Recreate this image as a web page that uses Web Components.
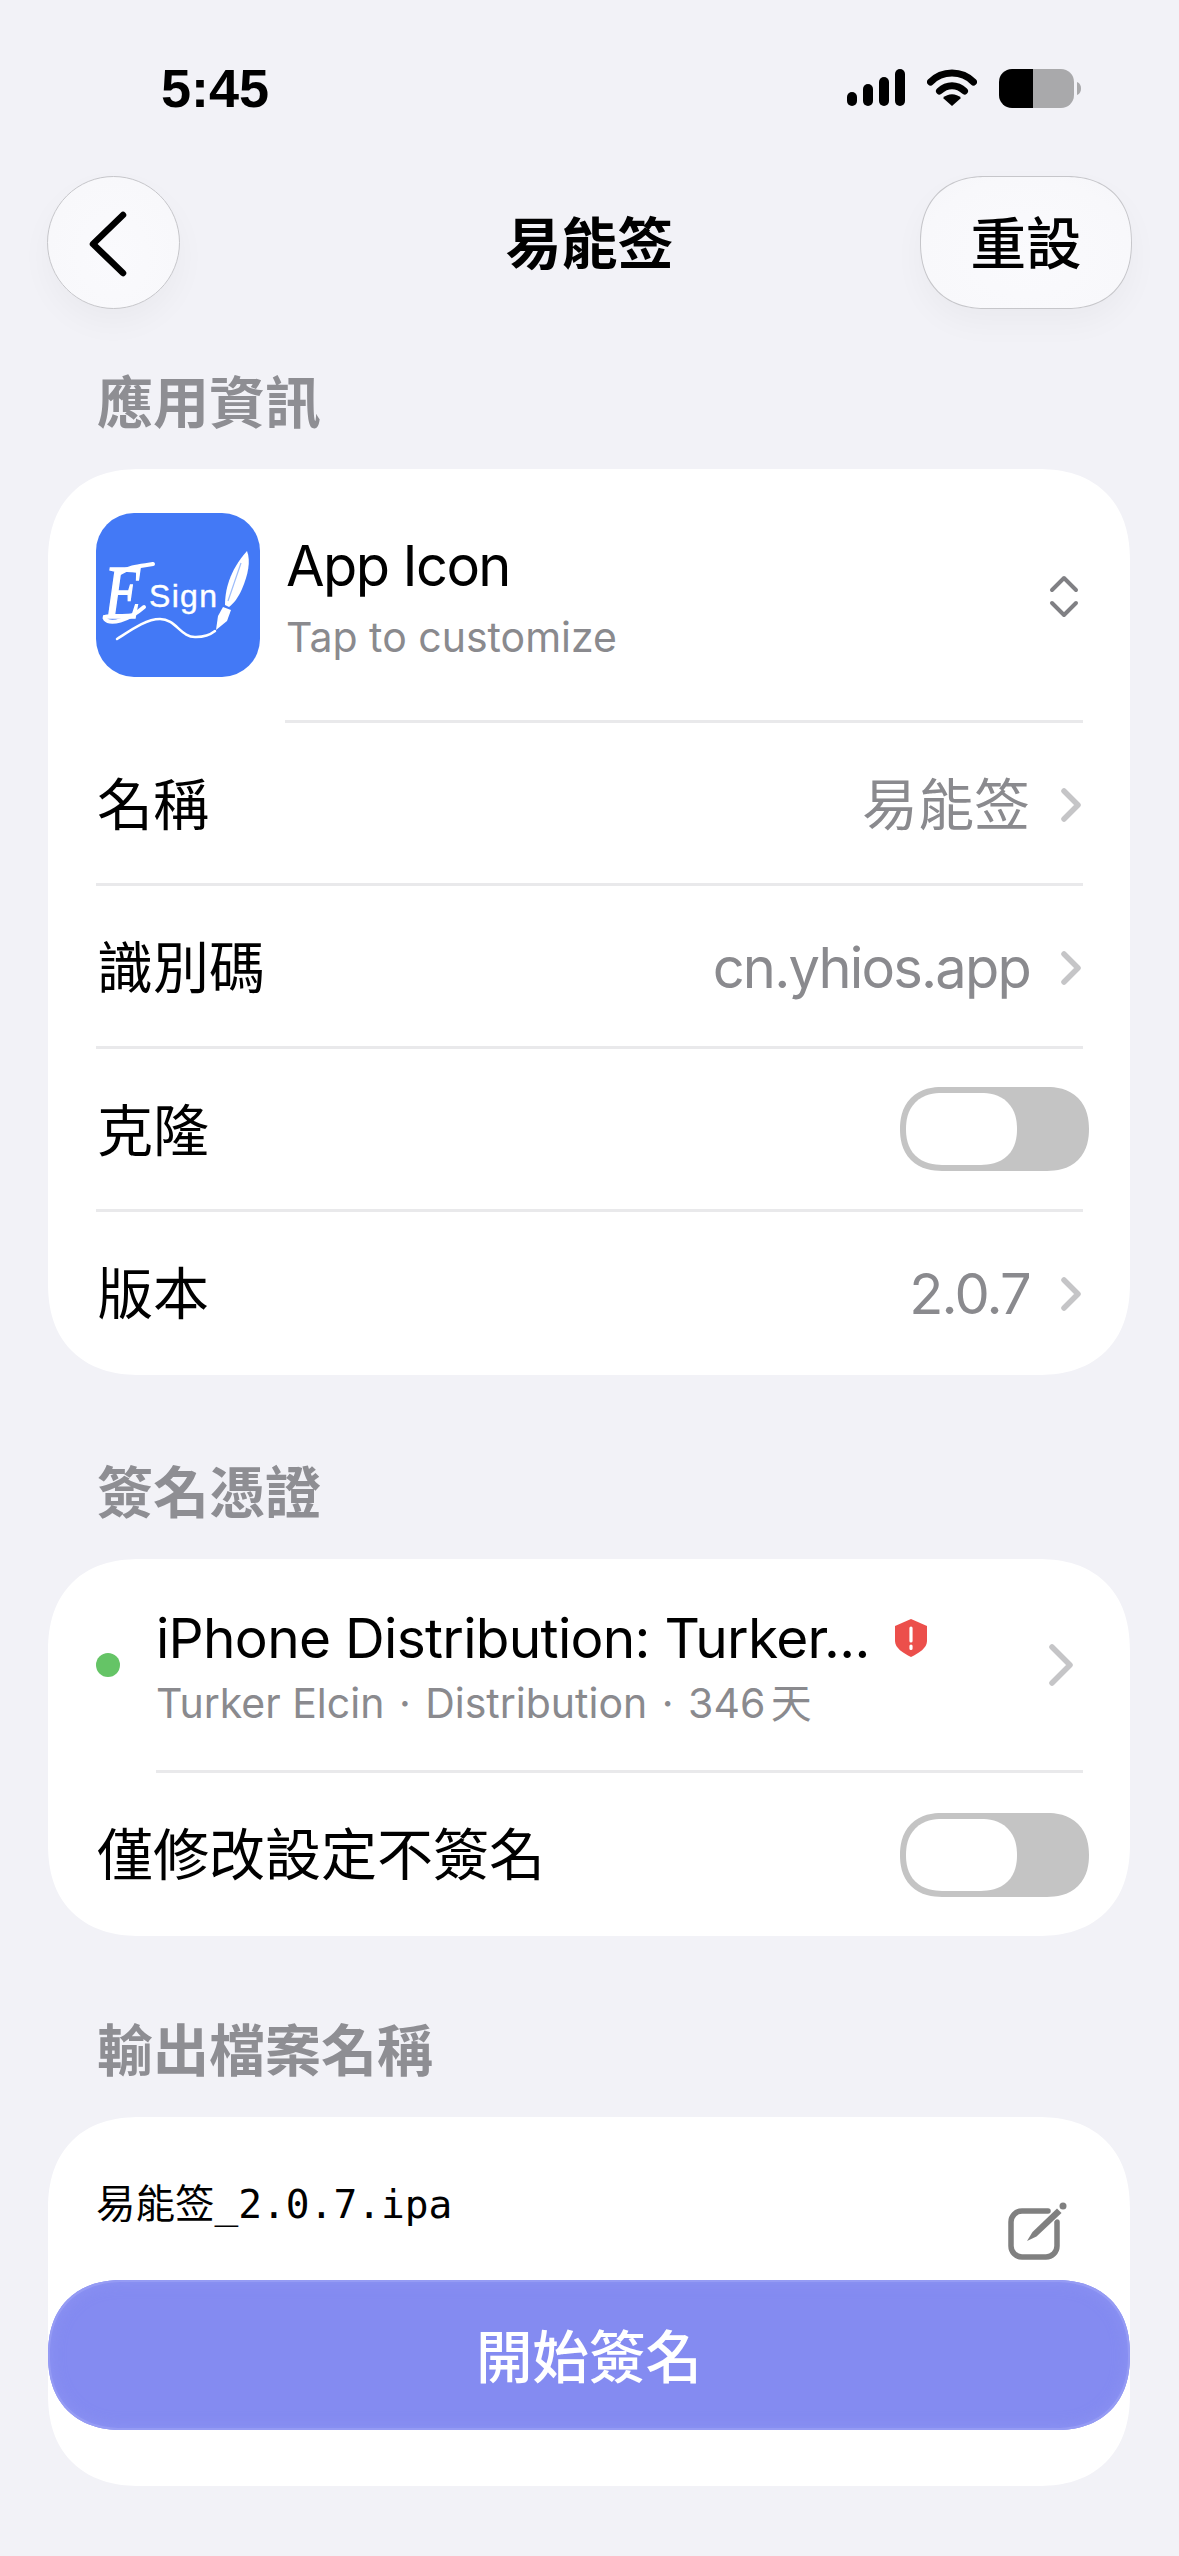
<!DOCTYPE html>
<html lang="zh-Hant">
<head>
<meta charset="utf-8">
<title>易能签</title>
<style>
    html, body { margin: 0; padding: 0; }
    body {
        position: relative;
        width: 1179px;
        height: 2556px;
        overflow: hidden;
        background: #f2f2f7;
        color: #000;
        font-family: Inter, "Noto Sans CJK TC", sans-serif;
    }
</style>
</head>
<body>
<status-bar time="5:45"></status-bar>
<nav-bar title="易能签" action="重設"></nav-bar>

<section-label style="--top: 62px">應用資訊</section-label>
<form-card>
    <app-icon-row title="App Icon" subtitle="Tap to customize"></app-icon-row>
    <form-row label="名稱" value="易能签" chevron flush></form-row>
    <form-row label="識別碼" value="cn.yhios.app" chevron></form-row>
    <form-row label="克隆"><toggle-switch></toggle-switch></form-row>
    <form-row label="版本" value="2.0.7" chevron></form-row>
</form-card>

<section-label style="--top: 86px">簽名憑證</section-label>
<form-card>
    <cert-row title="iPhone Distribution: Turker..." subtitle="Turker Elcin · Distribution · 346 天"></cert-row>
    <form-row label="僅修改設定不簽名" flush><toggle-switch style="margin-top: 3px"></toggle-switch></form-row>
</form-card>

<section-label style="--top: 83px">輸出檔案名稱</section-label>
<form-card>
    <file-row name="易能签_2.0.7.ipa"></file-row>
</form-card>

<primary-action>開始簽名</primary-action>

<script>
const CJK = '"Noto Sans CJK TC", sans-serif';
const CORNER = 'corner-shape: superellipse(1.2);';
const chevron = (w, h) => `<svg class="chevron" width="${w}" height="${h}" viewBox="0 0 ${w} ${h}" fill="none" stroke="#c5c5c7" stroke-width="5.500" stroke-linecap="round" stroke-linejoin="round"><path d="M3 3 L${w - 3} ${h / 2} L3 ${h - 3}"/></svg>`;

customElements.define('status-bar', class StatusBar extends HTMLElement {
    constructor() {
        super();
        this.attachShadow({ mode: 'open' }).innerHTML = `
            <style>
                :host { display: flex; justify-content: space-between; height: 176px; box-sizing: border-box; padding: 69px 98px 0 161px; }
                span { font: 700 54px/39px "Liberation Sans", sans-serif; }
                div { display: flex; gap: 22px; height: 40px; }
                svg { display: block; }
            </style>
            <span>${this.getAttribute('time')}</span>
            <div>
                <svg width="58" height="37" viewBox="0 0 58 37">
                    <rect x="0" y="23" width="10" height="14" rx="5"/>
                    <rect x="16" y="15" width="10" height="22" rx="5"/>
                    <rect x="32" y="8" width="10" height="29" rx="5"/>
                    <rect x="48" y="0" width="10" height="37" rx="5"/>
                </svg>
                <svg width="50" height="37" viewBox="0 0 50 37" fill="none" stroke="#000" stroke-width="7" stroke-linecap="round">
                    <path d="M3.500 13 C15 1 35 1 46.500 13"/>
                    <path d="M12.500 22 C20 15 30 15 37.500 22"/>
                    <path d="M25 37 L16 29 C21 24 29 24 34 29 Z" fill="#000" stroke="none"/>
                </svg>
                <svg width="82" height="39" viewBox="0 0 82 39">
                    <path d="M13 0 H34 V39 H13 A13 13 0 0 1 0 26 V13 A13 13 0 0 1 13 0 Z"/>
                    <path d="M34 0 H62 A13 13 0 0 1 75 13 V26 A13 13 0 0 1 62 39 H34 Z" fill="#a9a9ab"/>
                    <path d="M78 13 C81 14 82 17 82 19.500 C82 22 81 25 78 26 Z" fill="#a9a9ab"/>
                </svg>
            </div>
        `;
    }
});

customElements.define('nav-bar', class NavBar extends HTMLElement {
    constructor() {
        super();
        this.attachShadow({ mode: 'open' }).innerHTML = `
            <style>
                :host { display: grid; grid-template-columns: 1fr auto 1fr; align-items: center; height: 133px; padding: 0 47px; }
                button {
                    display: flex; align-items: center; justify-content: center;
                    height: 133px; padding: 0 0 3px; box-sizing: border-box;
                    border: 1.500px solid #c6c6ca; border-radius: 66.500px;
                    background: radial-gradient(ellipse at 50% 60%, #fafafd 0%, #f8f8fb 70%, #f5f5f9 100%);
                    box-shadow: 0 14px 32px rgba(0, 0, 0, .035);
                    color: #000;
                    font: 500 55.500px/1 ${CJK};
                }
                .back { width: 133px; padding: 3px 11px 0 0; }
                .action { width: 212px; justify-self: end; ${CORNER} }
                h1 { margin: 0 0 6px; font: 700 56px/1 ${CJK}; }
            </style>
            <button class="back" aria-label="返回">
                <svg width="44" height="66" viewBox="0 0 44 66" fill="none" stroke="#000" stroke-width="6.500" stroke-linecap="round" stroke-linejoin="round"><path d="M37 4 L7 33 L37 62"/></svg>
            </button>
            <h1>${this.getAttribute('title')}</h1>
            <button class="action">${this.getAttribute('action')}</button>
        `;
    }
});

customElements.define('section-label', class SectionLabel extends HTMLElement {
    constructor() {
        super();
        this.attachShadow({ mode: 'open' }).innerHTML = `
            <style>
                :host { display: block; padding: var(--top) 50px 42px 97px; font: 600 56px/56px ${CJK}; color: #8e8e93; }
            </style>
            <slot></slot>
        `;
    }
});

customElements.define('form-card', class FormCard extends HTMLElement {
    constructor() {
        super();
        this.attachShadow({ mode: 'open' }).innerHTML = `
            <style>
                :host { display: block; margin: 0 49px 0 48px; padding: 0 47px 3px 48px; background: #fff; border-radius: 92px; ${CORNER} }
            </style>
            <slot></slot>
        `;
    }
});

customElements.define('form-row', class FormRow extends HTMLElement {
    constructor() {
        super();
        const value = this.getAttribute('value');
        const latin = value && /^[\x00-\x7f]+$/.test(value);
        this.attachShadow({ mode: 'open' }).innerHTML = `
            <style>
                :host { display: flex; align-items: center; gap: 31px; height: 163px; box-sizing: border-box; border-top: 3px solid #e9e9eb; font: 400 56px/1 Inter, ${CJK}; }
                :host([flush]) { border-top: 0; height: 160px; }
                .label { flex: 1; padding: 4px 0 0 1px; }
                .value { color: #8a8a8e; padding-top: 4px; }
                .latin { letter-spacing: -1.800px; }
                .chevron { margin: 3px 2px 0 0; }
                ::slotted(toggle-switch) { margin-right: -6px; }
            </style>
            <span class="label">${this.getAttribute('label')}</span>
            ${value ? `<span class="value ${latin ? 'latin' : ''}">${value}</span>` : ''}
            ${this.hasAttribute('chevron') ? chevron(20, 34) : ''}
            <slot></slot>
        `;
    }
});

customElements.define('toggle-switch', class ToggleSwitch extends HTMLElement {
    constructor() {
        super();
        this.attachShadow({ mode: 'open' }).innerHTML = `
            <style>
                :host { display: block; width: 189px; height: 84px; box-sizing: border-box; padding: 6px; border-radius: 42px; background: #c4c4c4; ${CORNER} }
                i { display: block; width: 111px; height: 72px; border-radius: 36px; background: #fff; ${CORNER} }
            </style>
            <i></i>
        `;
    }
});

customElements.define('app-icon-row', class AppIconRow extends HTMLElement {
    constructor() {
        super();
        this.attachShadow({ mode: 'open' }).innerHTML = `
            <style>
                :host { display: flex; align-items: stretch; height: 254px; }
                .icon { flex: none; display: block; align-self: center; margin: 0 25px 3px 0; }
                .body { flex: 1; display: flex; align-items: center; border-bottom: 3px solid #e9e9eb; padding-left: 1px; }
                .text { flex: 1; display: flex; flex-direction: column; gap: 21px; padding-top: 7px; }
                b { font: 400 56px/56px Inter, sans-serif; letter-spacing: -1.600px; }
                small { font: 400 41px/44px Inter, sans-serif; color: #8a8a8e; }
                .updown { margin: 3px 4px 0 0; }
            </style>
            <svg class="icon" width="164" height="164" viewBox="0 0 164 164">
                <rect width="164" height="164" rx="38" fill="#4379f6"/>
                <text transform="translate(8 105) scale(.8 1)" font-family="Liberation Serif" font-style="italic" font-size="76" fill="#fff" stroke="#fff" stroke-width="1.500">E</text>
                <path d="M9 106 C14 112 32 108 48 94 M24 60 C34 53 46 53 57 51" fill="none" stroke="#fff" stroke-width="4" stroke-linecap="round"/>
                <text x="53" y="94" font-family="Liberation Sans" font-size="32" fill="#fff" stroke="#fff" stroke-width=".4" textLength="68" lengthAdjust="spacing">Sign</text>
                <path d="M21 126 C35 117 50 106 64 106 C80 106 85 125 100 124 C107 124 114 122 119 118" fill="none" stroke="#fff" stroke-width="2.500" stroke-linecap="round"/>
                <path d="M151 38 C155 48 152 62 146 76 C142 85 138 90 133 94 L129 92 C129 78 133 58 151 38 Z" fill="#fff"/>
                <path d="M127 94 L135 97 L131 108 L120 117 L122 103 Z" fill="#fff"/>
                <path d="M145 50 L132 88" stroke="#9dbcfa" stroke-width="1.200" fill="none"/>
            </svg>
            <div class="body">
                <div class="text"><b>${this.getAttribute('title')}</b><small>${this.getAttribute('subtitle')}</small></div>
                <svg class="updown" width="30" height="43" viewBox="0 0 30 43" fill="none" stroke="#808084" stroke-width="4" stroke-linecap="round" stroke-linejoin="round"><path d="M3 15 L15 3 L27 15"/><path d="M3 28 L15 40 L27 28"/></svg>
            </div>
        `;
    }
});

customElements.define('cert-row', class CertRow extends HTMLElement {
    constructor() {
        super();
        const parts = this.getAttribute('subtitle').split(' · ');
        const last = parts.pop();
        const sub = [...parts, `<span class="days">${last}</span>`].join('<i>·</i>');
        this.attachShadow({ mode: 'open' }).innerHTML = `
            <style>
                :host { display: flex; align-items: center; height: 214px; box-sizing: border-box; font-family: Inter, ${CJK}; }
                .dot { flex: none; width: 24px; height: 24px; border-radius: 50%; background: #65c466; margin: 0 36px 3px 0; }
                .body { flex: 1; align-self: stretch; display: flex; align-items: center; border-bottom: 3px solid #e9e9eb; padding-right: 10px; }
                .text { flex: 1; display: flex; flex-direction: column; gap: 11px; padding-top: 5px; }
                .title { display: flex; align-items: center; gap: 25px; font-size: 55px; line-height: 60px; letter-spacing: -.7px; white-space: nowrap; }
                small { font-size: 41px; line-height: 48px; color: #8a8a8e; white-space: nowrap; }
                i { font-style: normal; margin: 0 14.500px; }
                .days { word-spacing: -6px; }
                svg { flex: none; }
            </style>
            <i class="dot"></i>
            <div class="body">
                <div class="text">
                    <div class="title"><span>${this.getAttribute('title')}</span>
                        <svg width="32" height="38" viewBox="0 0 32 38"><path d="M16 0 L32 7 V22 C32 29 24 34 16 38 C8 34 0 29 0 22 V7 Z" fill="#ec4f4b"/><path d="M16 9 V22 M16 27 V29.500" stroke="#fff" stroke-width="3.200" stroke-linecap="round"/></svg>
                    </div>
                    <small>${sub}</small>
                </div>
                ${chevron(24, 42)}
            </div>
        `;
    }
});

customElements.define('file-row', class FileRow extends HTMLElement {
    constructor() {
        super();
        this.attachShadow({ mode: 'open' }).innerHTML = `
            <style>
                :host { display: flex; justify-content: space-between; align-items: flex-start; height: 366px; box-sizing: border-box; padding-top: 62px; font: 400 39.500px/50px "DejaVu Sans Mono", "Noto Sans CJK TC", monospace; }
                svg { margin: 23px 15px 0 0; }
            </style>
            <span>${this.getAttribute('name')}</span>
            <svg width="60" height="58" viewBox="0 0 60 58" fill="none" stroke="#808080" stroke-width="5.500" stroke-linecap="round" stroke-linejoin="round">
                <path d="M40 9 H14 A11 11 0 0 0 3 20 V44 A11 11 0 0 0 14 55 H38 A11 11 0 0 0 49 44 V20"/>
                <path d="M19 39 L24.500 30 L49 6.500 L53.500 11 L28.500 34.500 Z" fill="#808080" stroke="#fff" stroke-width="2"/>
                <path d="M19 39 L24.500 30 L49 6.500 L53.500 11 L28.500 34.500 Z" fill="#808080" stroke="none"/>
                <circle cx="55" cy="4" r="3.500" fill="#808080" stroke="none"/>
            </svg>
        `;
    }
});

customElements.define('primary-action', class PrimaryAction extends HTMLElement {
    constructor() {
        super();
        this.attachShadow({ mode: 'open' }).innerHTML = `
            <style>
                :host { position: absolute; left: 48px; right: 49px; bottom: 126px; }
                button {
                    display: block; width: 100%; height: 150px; border-radius: 75px;
                    ${CORNER}
                    border: 0; padding: 0 0 4px; color: #fff;
                    background: #848bf1;
                    box-shadow: inset 0 0 0 2px #959bf4, inset 0 0 16px rgba(150, 156, 245, .6);
                    font: 500 56.500px/1 ${CJK};
                }
            </style>
            <button><slot></slot></button>
        `;
    }
});
</script>
</body>
</html>
